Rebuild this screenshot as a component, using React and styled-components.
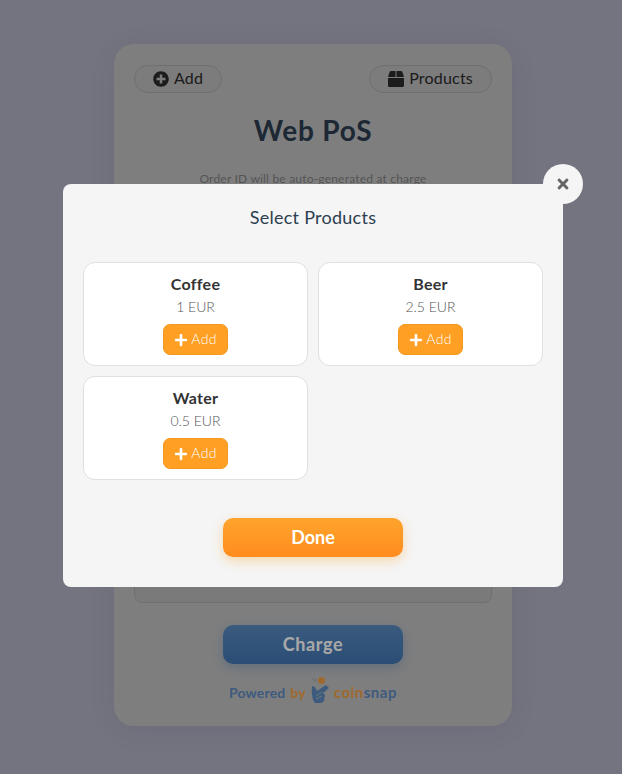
import React from 'react'
import styled, { createGlobalStyle } from 'styled-components'
import { FaPlusCircle, FaBox, FaPlus, FaTimes } from 'react-icons/fa'

const GlobalStyle = createGlobalStyle`
  html, body {
    margin: 0;
    padding: 0;
    font-family: Lato, "Open Sans", sans-serif;
  }
  * { box-sizing: border-box; }
`

const Page = styled.div`
  width: 622px;
  height: 774px;
  overflow: hidden;
  display: flex;
  justify-content: center;
  padding: 44px 0 0 4px;
  background: #b1b1c2;
`

const PosCard = styled.div`
  width: 398px;
  height: 682px;
  background: #c0c0c0;
  border-radius: 20px;
  padding: 21px 20px 25px;
  display: flex;
  flex-direction: column;
  align-items: center;
  box-shadow: 0 4px 30px rgba(80, 70, 140, 0.12);
`

const TopBar = styled.div`
  width: 100%;
  display: flex;
  justify-content: space-between;
`

const PillButton = styled.button`
  height: 28px;
  padding: 0 18px;
  display: flex;
  align-items: center;
  gap: 5px;
  border: 1px solid #a9a9a9;
  border-radius: 14px;
  background: #bcbcbc;
  color: #2b2b2b;
  font: 400 16px Lato, sans-serif;
  letter-spacing: 0.2px;
  svg { font-size: 16px; }
`

const PillLabel = styled.span`
  padding-bottom: 3px;
`

const Title = styled.h1`
  margin: 20px 0 0;
  font-size: 28px;
  line-height: 34px;
  font-weight: 700;
  color: #2c3e50;
  letter-spacing: 0.8px;
`

const OrderNote = styled.p`
  margin: 24px 0 0;
  font-size: 12px;
  line-height: 16px;
  letter-spacing: 0.2px;
  color: #808080;
`

const FormBox = styled.div`
  width: 100%;
  flex: 1;
  margin-top: 8px;
  background: #b9b9b9;
  border: 1px solid #aaa;
  border-radius: 8px;
`

const ChargeButton = styled.button`
  width: 180px;
  height: 39px;
  margin-top: 22px;
  padding: 0 0 2px;
  border: none;
  border-radius: 10px;
  background: linear-gradient(180deg, #598abf 0%, #4276b3 100%);
  color: #fff;
  font: 700 18px Lato, sans-serif;
  letter-spacing: 0.6px;
  box-shadow: 0 4px 12px rgba(60, 110, 180, 0.3);
`

const PoweredRow = styled.div`
  margin-top: 13px;
  display: flex;
  align-items: flex-end;
  gap: 5px;
  font-size: 14px;
  font-weight: 700;
  letter-spacing: 0.15px;
  color: #5e8ac0;
  svg { margin-bottom: -2px; }
`

const Orange = styled.span`
  color: #f0a045;
`

const Brand = styled.span`
  font-size: 15px;
  letter-spacing: 0.5px;
`

const Overlay = styled.div`
  position: fixed;
  inset: 0;
  padding: 0 0 3px 4px;
  display: flex;
  align-items: center;
  justify-content: center;
  background: rgba(0, 0, 0, 0.34);
`

const Modal = styled.div`
  position: relative;
  width: 500px;
  height: 403px;
  padding: 20px;
  background: #f5f5f5;
  border-radius: 8px;
  display: flex;
  flex-direction: column;
  align-items: center;
`

const CloseButton = styled.button`
  position: absolute;
  top: -20px;
  right: -20px;
  width: 40px;
  height: 40px;
  border: none;
  border-radius: 50%;
  background: #f5f5f5;
  color: #666;
  font-size: 16px;
  display: flex;
  align-items: center;
  justify-content: center;
  padding: 0;
`

const ModalTitle = styled.h2`
  margin: 2px 0 0;
  font-size: 18px;
  line-height: 22px;
  font-weight: 400;
  letter-spacing: 0.25px;
  color: #2c3e50;
`

const ProductGrid = styled.div`
  width: 100%;
  margin-top: 34px;
  display: grid;
  grid-template-columns: 1fr 1fr;
  gap: 10px;
`

const ProductCard = styled.div`
  height: 104px;
  padding-top: 11px;
  background: #fff;
  border: 1px solid #e0e0e0;
  border-radius: 12px;
  display: flex;
  flex-direction: column;
  align-items: center;
`

const ProductName = styled.div`
  font-size: 16px;
  line-height: 20px;
  font-weight: 700;
  letter-spacing: 0.3px;
  color: #333;
`

const ProductPrice = styled.div`
  margin-top: 4px;
  font-size: 14px;
  line-height: 18px;
  font-weight: 300;
  color: #555;
`

const AddButton = styled.button`
  width: 65px;
  height: 31px;
  margin-top: 8px;
  padding: 0;
  border: 1px solid #f29a20;
  border-radius: 7px;
  background: #ff9f24;
  color: #fff;
  font: 300 14px Lato, sans-serif;
  letter-spacing: 0.3px;
  display: flex;
  align-items: center;
  justify-content: center;
  gap: 3px;
  svg { font-size: 14px; }
`

const AddLabel = styled.span`
  padding-bottom: 2px;
`

const DoneButton = styled.button`
  width: 180px;
  height: 39px;
  margin-top: 38px;
  padding: 0 0 2px;
  border: none;
  border-radius: 10px;
  background: linear-gradient(180deg, #ffa42c 0%, #ff8c1e 100%);
  color: #fff;
  font: 700 18px Lato, sans-serif;
  box-shadow: 0 4px 12px rgba(255, 149, 0, 0.3);
`

const products = [
  { name: 'Coffee', price: '1 EUR' },
  { name: 'Beer', price: '2.5 EUR' },
  { name: 'Water', price: '0.5 EUR' },
]

const CoinsnapMark = () => (
  <svg width="18" height="26" viewBox="0 0 18 26">
    <path d="M1 2l4 3M3 0.5l3 3" stroke="#999" strokeWidth="0.8" fill="none" />
    <circle cx="10.5" cy="3.5" r="3.5" fill="#f0a045" />
    <path
      d="M1 9l3 1 2 4 9-6 3 3-6 5 2 2-1 6q-4 4-9 2-4-4-3-17z"
      fill="#5e8ac0"
    />
    <path d="M5 19l6-4M5 22l6-3" stroke="#c0c0c0" strokeWidth="0.8" fill="none" />
  </svg>
)

const App = () => {
  return (
    <>
      <GlobalStyle />
      <Page>
        <PosCard>
          <TopBar>
            <PillButton><FaPlusCircle /><PillLabel>Add</PillLabel></PillButton>
            <PillButton><FaBox /><PillLabel>Products</PillLabel></PillButton>
          </TopBar>
          <Title>Web PoS</Title>
          <OrderNote>Order ID will be auto-generated at charge</OrderNote>
          <FormBox />
          <ChargeButton>Charge</ChargeButton>
          <PoweredRow>
            Powered <Orange>by</Orange>
            <CoinsnapMark />
            <Brand><Orange>coin</Orange>snap</Brand>
          </PoweredRow>
        </PosCard>
      </Page>
      <Overlay>
        <Modal>
          <CloseButton><FaTimes /></CloseButton>
          <ModalTitle>Select Products</ModalTitle>
          <ProductGrid>
            {products.map((p) => (
              <ProductCard key={p.name}>
                <ProductName>{p.name}</ProductName>
                <ProductPrice>{p.price}</ProductPrice>
                <AddButton><FaPlus /><AddLabel>Add</AddLabel></AddButton>
              </ProductCard>
            ))}
          </ProductGrid>
          <DoneButton>Done</DoneButton>
        </Modal>
      </Overlay>
    </>
  )
}

export default App
